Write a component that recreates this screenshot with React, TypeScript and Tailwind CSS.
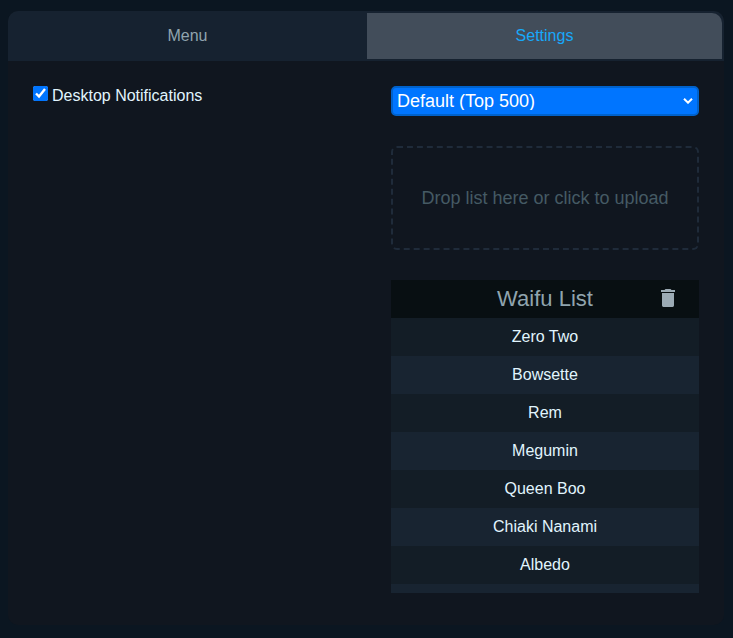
const names = [
  "Zero Two",
  "Bowsette",
  "Rem",
  "Megumin",
  "Queen Boo",
  "Chiaki Nanami",
  "Albedo",
];

function TrashIcon() {
  return (
    <svg viewBox="0 0 14 18" className="h-[18px] w-[14px] fill-[#9cabb5]">
      <path d="M4.500 0h5l1 1H14v2H0V1h3.500zM1 4h12v12.600a1.400 1.400 0 0 1-1.400 1.400H2.400A1.400 1.400 0 0 1 1 16.600z" />
    </svg>
  );
}

function Tabs() {
  return (
    <div className="flex h-[50px] bg-[#162230] text-base">
      <button className="flex flex-1 items-center justify-center pb-px text-[#90a4ae]">
        Menu
      </button>
      <button className="my-0.5 mr-0.5 flex w-[355px] items-center justify-center rounded-tr-[10px] bg-[#424d5a] pb-px text-[#18a8fa]">
        Settings
      </button>
    </div>
  );
}

function ListSelect() {
  return (
    <div className="relative">
      <select className="block h-[30px] w-full appearance-none rounded-[5px] border-2 border-[#0062cc] bg-[#0075ff] pl-1 text-lg leading-none text-white">
        <option>Default (Top 500)</option>
      </select>
      <svg
        viewBox="0 0 10 6"
        className="pointer-events-none absolute top-3 right-1.5 h-1.5 w-2.5 fill-none stroke-white stroke-2"
      >
        <path d="M1 0.700L5 4.700L9 0.700" />
      </svg>
    </div>
  );
}

function WaifuList() {
  return (
    <div className="mt-[30px] h-[313px] overflow-hidden">
      <div className="grid h-[38px] grid-cols-[62px_1fr_62px] items-center bg-[#080f12] text-[#90a4ae]">
        <h2 className="col-start-2 text-center text-[22px] leading-[38px]">Waifu List</h2>
        <button aria-label="Clear list" className="flex justify-center pb-0.5">
          <TrashIcon />
        </button>
      </div>
      <ul>
        {names.map((name) => (
          <li
            key={name}
            className="h-[38px] text-center text-base leading-[38px] text-[#e1f5fe] odd:bg-[#131d26] even:bg-[#182431]"
          >
            {name}
          </li>
        ))}
        <li className="h-[9px] bg-[#182431]" />
      </ul>
    </div>
  );
}

export default function App() {
  return (
    <div className="h-[638px] overflow-hidden bg-[#0b1621] pt-[11px] pr-[9px] pl-2 font-['Liberation_Sans',Arial,sans-serif]">
      <div className="h-[614px] overflow-hidden rounded-[10px] bg-[#10161f]">
        <Tabs />
        <div className="flex px-[25px] pt-[25px]">
          <div className="w-[358px]">
            <label className="flex items-start text-base leading-[19px] text-[#e1f5fe]">
              <input type="checkbox" defaultChecked className="mr-1 size-[15px]" />
              Desktop Notifications
            </label>
          </div>
          <div className="w-[308px]">
            <ListSelect />
            <div className="mt-[30px] flex h-[104px] items-center justify-center rounded-[6px] border-2 border-dashed border-[#1f2b3a] text-lg text-[#455a64]">
              Drop list here or click to upload
            </div>
            <WaifuList />
          </div>
        </div>
      </div>
    </div>
  );
}
